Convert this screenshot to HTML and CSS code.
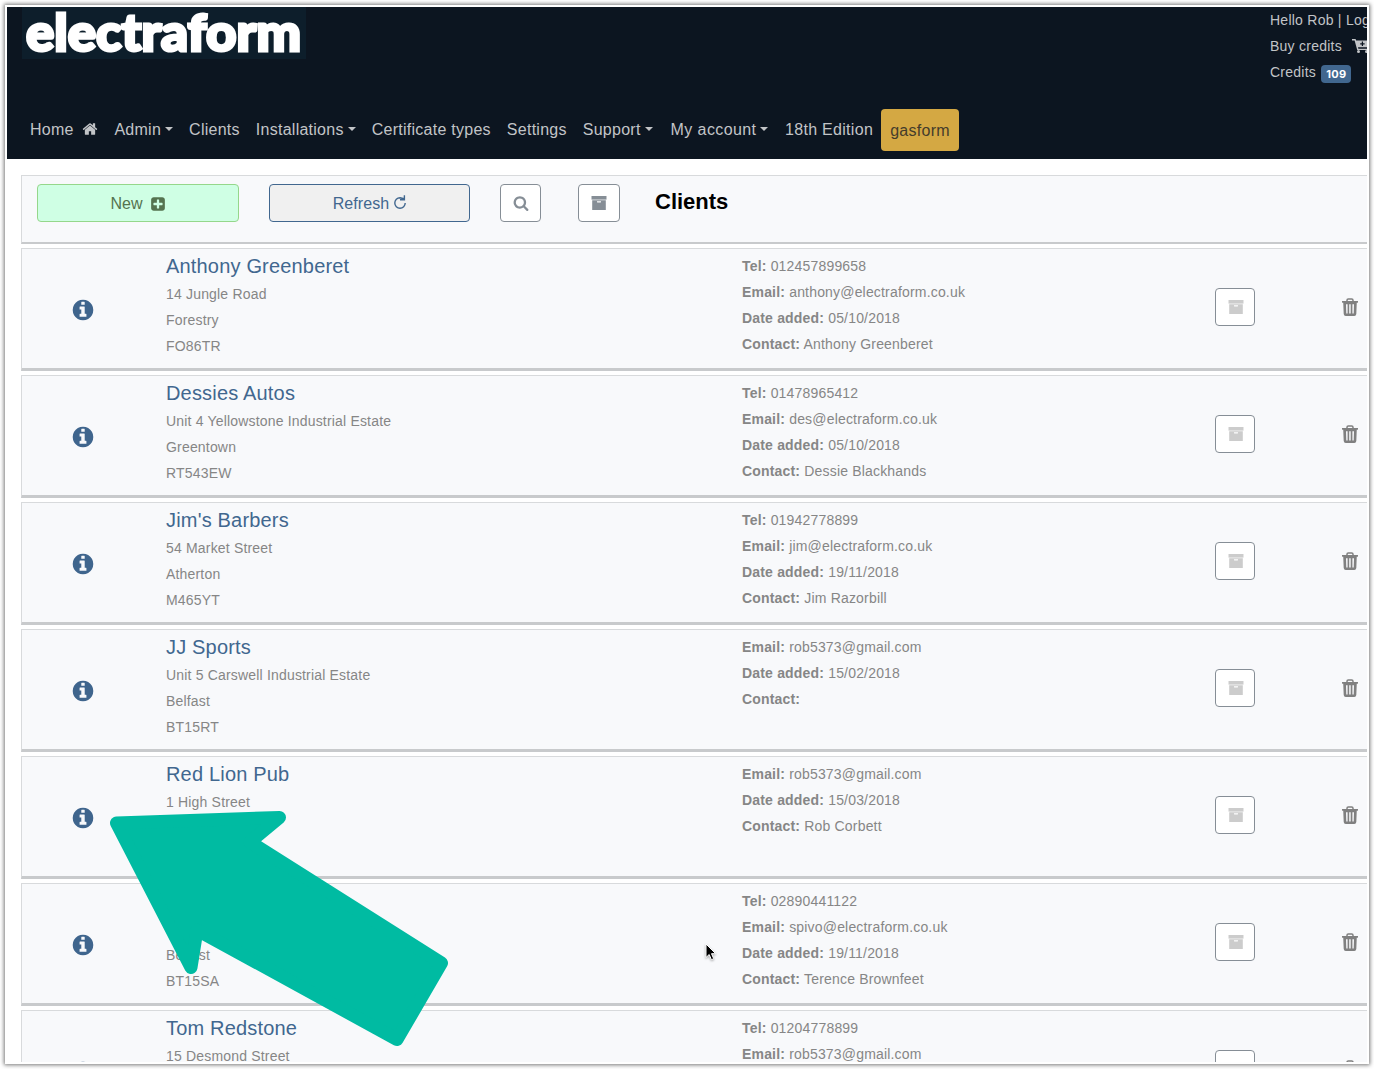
FILE: index.html
```html
<!DOCTYPE html>
<html lang="en">
<head>
    <meta charset="UTF-8" />
    <title>electraform - Clients</title>
    <link rel="stylesheet" href="styles.css">
</head>
<body>
    <svg class="sprite" width="0" height="0">
        <symbol id="home" viewBox="0 0 1792 1792"><path d="M1472 992v480q0 26-19 45t-45 19h-384v-384h-256v384h-384q-26 0-45-19t-19-45v-480q0-1 .5-3t.5-3l575-474 575 474q1 2 1 6zm223-69l-62 74q-8 9-21 11h-3q-13 0-21-7l-692-577-692 577q-12 8-24 7-13-2-21-11l-62-74q-8-10-7-23.5t11-21.5l719-599q32-26 76-26t76 26l244 204v-195q0-14 9-23t23-9h192q14 0 23 9t9 23v408l219 182q10 8 11 21.5t-7 23.5z"/></symbol>
        <symbol id="info" viewBox="0 0 1792 1792"><path d="M1152 1376v-160q0-14-9-23t-23-9h-96v-512q0-14-9-23t-23-9h-320q-14 0-23 9t-9 23v160q0 14 9 23t23 9h96v320h-96q-14 0-23 9t-9 23v160q0 14 9 23t23 9h448q14 0 23-9t9-23zm-128-896v-160q0-14-9-23t-23-9h-192q-14 0-23 9t-9 23v160q0 14 9 23t23 9h192q14 0 23-9t9-23zm640 416q0 209-103 385.5t-279.5 279.5-385.5 103-385.5-103-279.5-279.5-103-385.5 103-385.5 279.5-279.5 385.5-103 385.5 103 279.5 279.5 103 385.5z"/></symbol>
        <symbol id="search" viewBox="0 0 1792 1792"><path d="M1216 832q0-185-131.5-316.5t-316.5-131.5-316.5 131.5-131.5 316.5 131.5 316.5 316.5 131.5 316.5-131.5 131.5-316.5zm512 832q0 52-38 90t-90 38q-54 0-90-38l-343-342q-179 124-399 124-143 0-273.5-55.5t-225-150-150-225-55.5-273.5 55.5-273.5 150-225 225-150 273.5-55.5 273.5 55.5 225 150 150 225 55.5 273.5q0 220-124 399l343 343q37 37 37 90z"/></symbol>
        <symbol id="archive" viewBox="0 0 16 16"><path d="M.5 1h15v3.600h-15z"/><path fill-rule="evenodd" d="M1.200 5.200h13.600V15H1.200zM6 6.200v.8q0 .4.4.4h3.200q.4 0 .4-.4v-.8z"/></symbol>
        <symbol id="plus" viewBox="0 0 1792 1792"><path d="M1408 960v-128q0-26-19-45t-45-19h-320v-320q0-26-19-45t-45-19h-128q-26 0-45 19t-19 45v320h-320q-26 0-45 19t-19 45v128q0 26 19 45t45 19h320v320q0 26 19 45t45 19h128q26 0 45-19t19-45v-320h320q26 0 45-19t19-45zm256-544v960q0 119-84.500 203.500t-203.500 84.500h-960q-119 0-203.500-84.500t-84.500-203.500v-960q0-119 84.500-203.500t203.500-84.500h960q119 0 203.500 84.500t84.500 203.500z"/></symbol>
        <symbol id="cart" viewBox="0 0 18 16"><path fill-rule="evenodd" d="M0 1h3.600l.5 1.600H18l-1.700 6.700H6l.4 1.400h9.600v1.300H5.200L2.600 2.400H0zM9.800 3.600v1.600H8.200v1.200h1.600V8H11V6.400h1.600V5.200H11V3.600z"/><circle cx="6.500" cy="13.600" r="1.500"/><circle cx="14.500" cy="13.600" r="1.500"/></symbol>
        <symbol id="refresh" viewBox="0 0 12 14"><path d="M11.200 8A5.200 5.200 0 1 1 6 2.800L10 3.800M10.400 .3V4.800H6" fill="none" stroke="currentColor" stroke-width="1.400"/></symbol>
        <symbol id="trash" viewBox="0 0 16 18"><path d="M5 3.400V2.200Q5 .9 6.300 .9h3.400Q11 .9 11 2.200v1.200" fill="none" stroke="currentColor" stroke-width="1.500"/><path d="M0 3h16v1.700H0z"/><path fill-rule="evenodd" d="M1.200 4h13.600l-.5 12q-.2 2-2 2H3.700q-1.800 0-2-2zM4 6.200l.3 9.300h1.300V6.200zM7.200 6.200v9.300h1.500V6.200zM10.400 6.200v9.300h1.300l.3-9.300z"/></symbol>
    </svg>

    <div class="window">
        <header class="header">
            <div class="header-top">
                <svg class="logo" width="284" height="52" viewBox="0 0 284 52">
                    <text x="4" y="44" textLength="275" lengthAdjust="spacingAndGlyphs">electraform</text>
                </svg>
                <div class="account">
                    <div>Hello Rob | Log</div>
                    <div>Buy credits <svg class="cart"><use href="#cart"/></svg></div>
                    <div>Credits <span class="badge">109</span></div>
                </div>
            </div>
            <nav class="nav">
                <a class="nav-home">Home <svg><use href="#home"/></svg></a>
                <a class="dropdown nav-admin">Admin</a>
                <a>Clients</a>
                <a class="dropdown">Installations</a>
                <a>Certificate types</a>
                <a>Settings</a>
                <a class="dropdown">Support</a>
                <a class="dropdown nav-account">My account</a>
                <a class="nav-edition">18th Edition</a>
                <a class="gasform">gasform</a>
            </nav>
        </header>

        <main class="content">
            <div class="toolbar">
                <button class="btn btn-new">New <svg><use href="#plus"/></svg></button>
                <button class="btn btn-refresh">Refresh <svg><use href="#refresh"/></svg></button>
                <button class="btn btn-search"><svg><use href="#search"/></svg></button>
                <button class="btn btn-archived"><svg><use href="#archive"/></svg></button>
                <h1>Clients</h1>
            </div>

            <div class="client">
                <svg class="info"><use href="#info"/></svg>
                <div class="address">
                    <h2>Anthony Greenberet</h2>
                    <p>14 Jungle Road</p>
                    <p>Forestry</p>
                    <p>FO86TR</p>
                </div>
                <div class="details">
                    <p><b>Tel:</b> 012457899658</p>
                    <p><b>Email:</b> anthony@electraform.co.uk</p>
                    <p><b>Date added:</b> 05/10/2018</p>
                    <p><b>Contact:</b> Anthony Greenberet</p>
                </div>
                <button class="btn btn-archive"><svg><use href="#archive"/></svg></button>
                <svg class="trash"><use href="#trash"/></svg>
            </div>

            <div class="client">
                <svg class="info"><use href="#info"/></svg>
                <div class="address">
                    <h2>Dessies Autos</h2>
                    <p>Unit 4 Yellowstone Industrial Estate</p>
                    <p>Greentown</p>
                    <p>RT543EW</p>
                </div>
                <div class="details">
                    <p><b>Tel:</b> 01478965412</p>
                    <p><b>Email:</b> des@electraform.co.uk</p>
                    <p><b>Date added:</b> 05/10/2018</p>
                    <p><b>Contact:</b> Dessie Blackhands</p>
                </div>
                <button class="btn btn-archive"><svg><use href="#archive"/></svg></button>
                <svg class="trash"><use href="#trash"/></svg>
            </div>

            <div class="client">
                <svg class="info"><use href="#info"/></svg>
                <div class="address">
                    <h2>Jim's Barbers</h2>
                    <p>54 Market Street</p>
                    <p>Atherton</p>
                    <p>M465YT</p>
                </div>
                <div class="details">
                    <p><b>Tel:</b> 01942778899</p>
                    <p><b>Email:</b> jim@electraform.co.uk</p>
                    <p><b>Date added:</b> 19/11/2018</p>
                    <p><b>Contact:</b> Jim Razorbill</p>
                </div>
                <button class="btn btn-archive"><svg><use href="#archive"/></svg></button>
                <svg class="trash"><use href="#trash"/></svg>
            </div>

            <div class="client">
                <svg class="info"><use href="#info"/></svg>
                <div class="address">
                    <h2>JJ Sports</h2>
                    <p>Unit 5 Carswell Industrial Estate</p>
                    <p>Belfast</p>
                    <p>BT15RT</p>
                </div>
                <div class="details">
                    <p><b>Email:</b> rob5373@gmail.com</p>
                    <p><b>Date added:</b> 15/02/2018</p>
                    <p><b>Contact:</b></p>
                </div>
                <button class="btn btn-archive"><svg><use href="#archive"/></svg></button>
                <svg class="trash"><use href="#trash"/></svg>
            </div>

            <div class="client">
                <svg class="info"><use href="#info"/></svg>
                <div class="address">
                    <h2>Red Lion Pub</h2>
                    <p>1 High Street</p>
                </div>
                <div class="details">
                    <p><b>Email:</b> rob5373@gmail.com</p>
                    <p><b>Date added:</b> 15/03/2018</p>
                    <p><b>Contact:</b> Rob Corbett</p>
                </div>
                <button class="btn btn-archive"><svg><use href="#archive"/></svg></button>
                <svg class="trash"><use href="#trash"/></svg>
            </div>

            <div class="client">
                <svg class="info"><use href="#info"/></svg>
                <div class="address">
                    <h2></h2>
                    <p></p>
                    <p>Belfast</p>
                    <p>BT15SA</p>
                </div>
                <div class="details">
                    <p><b>Tel:</b> 02890441122</p>
                    <p><b>Email:</b> spivo@electraform.co.uk</p>
                    <p><b>Date added:</b> 19/11/2018</p>
                    <p><b>Contact:</b> Terence Brownfeet</p>
                </div>
                <button class="btn btn-archive"><svg><use href="#archive"/></svg></button>
                <svg class="trash"><use href="#trash"/></svg>
            </div>

            <div class="client">
                <svg class="info"><use href="#info"/></svg>
                <div class="address">
                    <h2>Tom Redstone</h2>
                    <p>15 Desmond Street</p>
                </div>
                <div class="details">
                    <p><b>Tel:</b> 01204778899</p>
                    <p><b>Email:</b> rob5373@gmail.com</p>
                </div>
                <button class="btn btn-archive"><svg><use href="#archive"/></svg></button>
                <svg class="trash"><use href="#trash"/></svg>
            </div>
        </main>
    </div>

    <!-- pointer to the info button -->
    <svg class="arrow" width="350" height="250" viewBox="105 805 350 250">
        <path d="M116.500 823L279.500 817.500 250 842 441.500 963 397 1039.500 197 930 191 967.500z"/>
    </svg>
    <svg class="cursor" width="14" height="20" viewBox="0 0 14 20">
        <path d="M1 1v13.500l3.200-3 2.200 5.200 2.300-1-2.200-5h4.200z"/>
    </svg>
</body>
</html>
```
FILE: styles.css
```css
* {
    box-sizing: border-box;
}
body {
    font-family: "Liberation Sans", Arial, sans-serif;
    background: #fff;
    margin: 0;
    padding: 5px;
    height: 1069px;
    overflow: hidden;
}
svg {
    fill: currentColor;
}
.sprite {
    position: absolute;
}
.window {
    width: 1364px;
    height: 1059px;
    border: 2px solid #fff;
    box-shadow: 0 0 4px 1px #777;
    overflow: hidden;
}
.header {
    height: 152px;
    background: #0c1520;
    color: #c2c4c7;
}
.header-top {
    display: flex;
    justify-content: space-between;
    height: 102px;
    padding-left: 15px;
}
.logo {
    background: #0d1e2b;
    overflow: visible;
}
.logo text {
    font-family: Lato, sans-serif;
    font-weight: 900;
    font-size: 51px;
    fill: #fff;
    stroke: #fff;
    stroke-width: 3px;
}
.account {
    width: 97px;
    font-size: 14px;
    line-height: 26px;
    letter-spacing: 0.25px;
    white-space: nowrap;
}
.cart {
    width: 18px;
    height: 16px;
    margin-left: 6px;
    vertical-align: -3px;
}
.badge {
    display: inline-block;
    width: 30px;
    height: 18px;
    margin-left: 1px;
    background: #41678f;
    color: #fff;
    border-radius: 4px;
    font: bold 11px/18px Inter, sans-serif;
    letter-spacing: 0.3px;
    text-align: center;
    vertical-align: -1px;
}
.nav {
    display: flex;
    padding-left: 15px;
    font-size: 16px;
    line-height: 26px;
    letter-spacing: 0.26px;
    white-space: nowrap;
}
.nav a {
    height: 42px;
    padding: 8px;
}
.nav-home svg {
    width: 16px;
    height: 16px;
    margin-left: 4px;
    vertical-align: -2px;
}
.dropdown::after {
    content: "";
    display: inline-block;
    border: 4px solid transparent;
    border-top-color: currentColor;
    border-bottom: 0;
    margin-left: 4px;
    vertical-align: 4px;
}
.nav .nav-account {
    margin-left: 2px;
    letter-spacing: 0.4px;
}
.nav .nav-edition {
    width: 104px;
    margin-left: auto;
    letter-spacing: 0.3px;
}
.nav .gasform {
    width: 78px;
    margin-right: 408px;
    padding: 9px 0;
    background: #d4a843;
    color: #443c2b;
    border-radius: 4px;
    text-align: center;
}
.content {
    padding: 16px 0 0 14px;
}
.toolbar,
.client {
    width: 1400px;
    background: #f8f9fb;
    border: 1px solid #d8dadc;
    border-bottom: 2px solid #c8cacc;
    margin-bottom: 4px;
}
.toolbar {
    display: flex;
    height: 69px;
    padding: 8px 15px;
}
.btn {
    display: flex;
    align-items: center;
    justify-content: center;
    height: 38px;
    padding: 0;
    background: #fff;
    color: #868e96;
    border: 1px solid #868e96;
    border-radius: 4px;
    font: 16px "Liberation Sans", Arial, sans-serif;
}
.btn svg {
    width: 16px;
    height: 16px;
}
.btn-new {
    width: 202px;
    padding-top: 1px;
    background: #cfffe4;
    border-color: #95d78b;
    color: #55734f;
    margin-right: 30px;
}
.btn-new svg {
    margin-left: 7px;
}
.btn-refresh {
    width: 201px;
    padding-top: 1px;
    background: #f0f0f0;
    border-color: #41678f;
    color: #41678f;
    margin-right: 30px;
    letter-spacing: 0.1px;
}
.btn-refresh svg {
    width: 12px;
    height: 14px;
    margin: -3px 0 0 5px;
}
.btn-search {
    width: 41px;
    margin-right: 37px;
}
.btn-archived {
    width: 42px;
    margin-right: 35px;
}
.toolbar h1 {
    margin: 4px 0 0;
    font-size: 22px;
    line-height: 28px;
    color: #000;
}
.client {
    display: grid;
    grid-template-columns: 144px 576px 473px 127px 16px;
    height: 123px;
    padding-top: 4px;
    border-bottom-width: 3px;
    font-size: 14px;
    line-height: 26px;
    letter-spacing: 0.18px;
    color: #868686;
}
.info {
    width: 24px;
    height: 24px;
    margin: 44.5px 0 0 49px;
    color: #3f658d;
}
.client h2 {
    height: 28px;
    margin: 0;
    font-size: 20px;
    font-weight: normal;
    color: #41678f;
}
.client p {
    height: 26px;
    margin: 0;
}
.btn-archive {
    width: 40px;
    margin-top: 35px;
    padding-left: 2px;
    color: #ccc;
}
.trash {
    width: 16px;
    height: 18px;
    margin-top: 44.5px;
    color: #808080;
}
.arrow {
    position: absolute;
    left: 105px;
    top: 805px;
    fill: #00bba2;
    stroke: #00bba2;
    stroke-width: 13px;
    stroke-linejoin: round;
}
.cursor {
    position: absolute;
    left: 705px;
    top: 943px;
    fill: #000;
    stroke: #fff;
    filter: drop-shadow(0 1px 1px #0005);
}
```
